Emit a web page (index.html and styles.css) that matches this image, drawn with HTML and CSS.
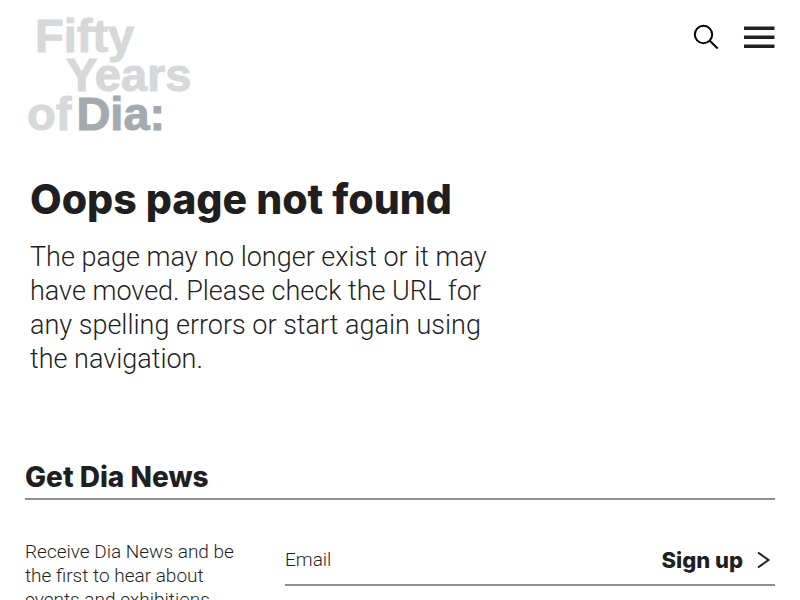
FILE: index.html
```html
<!DOCTYPE html>
<html lang="en">
<head>
<meta charset="utf-8">
<meta name="viewport" content="width=device-width, initial-scale=1">
<title>Page not found</title>
<link rel="stylesheet" href="styles.css">
</head>
<body>
<header class="site-header">
  <a class="logo" href="#">
    <span class="logo-line logo-fifty">Fifty</span>
    <span class="logo-line logo-years">Years</span>
    <span class="logo-line logo-dia"><span>of</span><span class="logo-strong">Dia:</span></span>
  </a>
  <nav class="tools" aria-label="Site">
    <button class="icon-button" type="button" aria-label="Search">
      <svg width="26" height="26" viewBox="0 0 26 26" fill="none" stroke="#000" stroke-width="2"><circle cx="10.5" cy="10.5" r="8.7"/><path d="M17 17l7.700 7.500"/></svg>
    </button>
    <button class="icon-button" type="button" aria-label="Menu">
      <svg width="31" height="22" viewBox="0 0 31 22" fill="#231f20"><path d="M0 0.600h30.500v3.400H0zM0 9.600h30.500v3.400H0zM0 18.600h30.500v3.400H0z"/></svg>
    </button>
  </nav>
</header>
<main class="message">
  <h1>Oops page not found</h1>
  <p>The page may no longer exist or it may have moved. Please check the URL for any spelling errors or start again using the navigation.</p>
</main>
<footer class="news">
  <h2>Get Dia News</h2>
  <div class="news-body">
    <p class="news-intro">Receive Dia News and be the first to hear about events and exhibitions</p>
    <form class="signup">
      <input type="email" placeholder="Email" aria-label="Email">
      <button class="submit" type="submit">Sign up
        <svg width="14" height="18" viewBox="0 0 14 18" fill="none" stroke="#1f1f1f" stroke-width="2"><path d="M1 1.500l10.500 7.500L1 16.500"/></svg>
      </button>
    </form>
  </div>
</footer>
</body>
</html>
```
FILE: styles.css
```css
* {
  box-sizing: border-box;
}

body {
  margin: 0;
  background: #fff;
  color: #1f1f1f;
  font-family: Roboto, Arial, sans-serif;
  font-weight: 300;
}

h1,
h2,
p {
  margin: 0;
}

button,
input {
  border: 0;
  padding: 0;
  background: none;
  color: inherit;
  font: inherit;
}

button {
  cursor: pointer;
}

svg {
  display: block;
}

.site-header {
  display: flex;
  justify-content: space-between;
  align-items: flex-start;
  padding: 16px 25px 0;
}

.logo {
  padding-left: 2px;
  color: #d6d8d9;
  font-family: "Liberation Sans", Arial, sans-serif;
  font-size: 47px;
  font-weight: 700;
  line-height: 39px;
  text-decoration: none;
  -webkit-text-stroke: 1px currentColor;
}

.logo-line {
  display: flex;
}

.logo-fifty {
  padding-left: 8px;
}

.logo-years {
  padding-left: 39px;
}

.logo-dia {
  gap: 5px;
}

.logo-strong {
  color: #a4aaae;
}

.tools {
  display: flex;
  align-items: center;
  gap: 25px;
  padding-top: 8px;
}

.message {
  max-width: 530px;
  padding: 42px 30px 0;
}

h1 {
  font-family: Inter, sans-serif;
  font-size: 41px;
  font-weight: 800;
  line-height: 48px;
  white-space: nowrap;
}

.message p {
  margin-top: 17px;
  font-size: 27px;
  line-height: 34px;
}

.news {
  padding: 84px 25px 25px;
}

h2 {
  padding-bottom: 4px;
  border-bottom: 2px solid #8f8f8f;
  font-family: Inter, sans-serif;
  font-size: 28px;
  font-weight: 800;
  line-height: 34px;
}

.news-body {
  display: grid;
  grid-template-columns: 220px 1fr;
  gap: 40px;
  align-items: start;
  padding-top: 40px;
}

.news-intro {
  font-size: 19px;
  line-height: 24px;
}

.signup {
  display: flex;
  align-items: center;
  height: 46px;
  padding-bottom: 5px;
  border-bottom: 2px solid #8f8f8f;
}

.signup input {
  flex: 1;
  min-width: 0;
  font-size: 19px;
}

.signup input::placeholder {
  color: #1f1f1f;
  opacity: 1;
}

.submit {
  display: flex;
  align-items: center;
  gap: 14px;
  padding-right: 4px;
  font-family: Inter, sans-serif;
  font-size: 22px;
  font-weight: 800;
}
```
